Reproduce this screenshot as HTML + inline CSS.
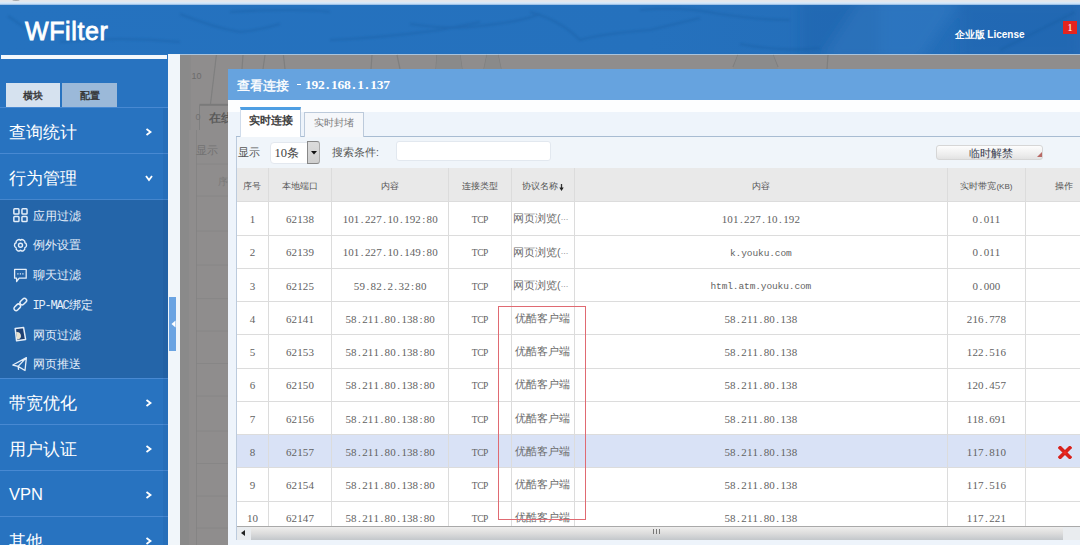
<!DOCTYPE html>
<html><head><meta charset="utf-8"><style>
*{margin:0;padding:0;box-sizing:border-box}
html,body{width:1080px;height:545px;overflow:hidden;background:#8e8e8e;font-family:"Liberation Sans",sans-serif;position:relative}
.abs{position:absolute}
#topstrip{left:0;top:0;width:1080px;height:5px;background:linear-gradient(#e5e6ea 0,#e5e6ea 1.2px,#dcebf9 2.2px,#c4ddf8 4px,#7fa8d4 5px)}
#header{left:0;top:5px;width:1080px;height:49px;background:linear-gradient(90deg,#2572bf,#2571bd 60%,#236bb6);overflow:hidden}
#logo{left:25px;top:12px;font-size:25px;color:#fff;font-weight:normal;-webkit-text-stroke:0.8px #fff;letter-spacing:0.6px}
#lic{left:954.5px;top:23px;font-size:10px;color:#fff;font-weight:bold}
#badge{left:1063px;top:16px;width:14px;height:13px;background:#e5241f;color:#fff;font-size:11px;text-align:center;line-height:13px;font-family:"Liberation Serif",serif}
#sidebar{left:0;top:54px;width:167.6px;height:491px;background:#2873c0}
#sbwhite{left:1px;top:1px;width:166px;height:4px;background:#f4f8fc}
.stab{top:29px;height:24px;font-size:10px;font-weight:normal;-webkit-text-stroke:0.35px #333;color:#333;text-align:center;line-height:25px}
.mrow{left:0;width:168px;height:46px;border-top:1px solid #4889d2;color:#fff;font-size:16.5px}
.mrow span.t{position:absolute;left:9px;top:13.5px}
.mrow svg{position:absolute;left:144.5px;top:19.5px}
#submenu{left:0;top:199px;width:168px;height:179px;background:#2465a9;border-top:1px solid #4586cd}
.sitem{left:13px;height:30px;color:#e4eef9;font-size:12px}
.sitem svg{position:absolute;left:0;top:6.75px;overflow:visible}
.sitem .tx{position:absolute;left:19.5px;top:7.5px;white-space:nowrap}
#lstrip{left:167.6px;top:54px;width:12.4px;height:491px;background:#f1f6fa}
#modal{left:228px;top:69px;width:852px;height:476px;background:#f0f5fb}
#mtitle{left:0;top:0;width:852px;height:30.5px;background:#66a3df}
#mwhite{left:0;top:30.5px;width:852px;height:8px;background:#fff}
#tabbar{left:0;top:38px;width:852px;height:30px;background:#eef4fb}
#tab1{left:12px;top:38px;width:61px;height:30px;background:#fff;border-top:3px solid #4d9ee3;font-size:12px;font-weight:bold;color:#333;text-align:center;line-height:26px}
#tab2{left:76px;top:43px;width:60px;height:25px;background:#f6f6f4;border:1px solid #c9d5e2;border-bottom:none;font-size:12px;color:#777;text-align:center;line-height:23px}
#tabline{left:8px;top:67px;width:844px;height:1px;background:#a9bdd3}
#panel{left:8px;top:68px;width:844px;height:408px;background:#f0f5fa;border-left:1px solid #bfcde0}
.ctl{font-size:12px;color:#444}
#sel{left:42px;top:72px;width:50px;height:23px;background:#fff;border:1px solid #e0e6ee;border-radius:3px;font-size:12px;color:#333;line-height:21px;padding-left:7px}
#selbtn{left:79px;top:72px;width:13px;height:23px;background:#d5d5d5;border:1px solid #9a9a9a}
#inp{left:168px;top:72px;width:156px;height:20px;background:#fff;border:1px solid #dde4ec;border-radius:2px}
#btn{left:708px;top:76px;width:107px;height:15px;background:linear-gradient(#fbfbfb,#e6e6e6);border:1px solid #d0d0d0;border-radius:3px;font-size:11px;color:#334;text-align:center;line-height:13px}
.th{font-size:9px;color:#555;text-align:center;display:flex;align-items:center;justify-content:center;white-space:nowrap;padding-top:2.5px}
.kb{font-family:"Liberation Sans";font-size:8px}
.td{display:flex;align-items:center;justify-content:center;white-space:nowrap;color:#626262;font-family:"Liberation Serif",serif;font-size:11px;padding-top:1.5px}
.td i{display:inline-block;font-style:normal;text-align:center}
.td i.L{font-family:"Liberation Mono",monospace;font-size:9.5px}
.td i.U{font-family:"Liberation Serif",serif;font-size:9.5px}
.td b.cj{font-weight:normal;font-family:"Liberation Sans"}
.cjk{font-family:"Liberation Sans";font-size:10.5px;color:#6a6a6a}
.hl{background:#dcdcdc}
.vl{background:#dcdcdc}
#scroll{left:237px;top:526px;width:843px;height:13px;background:#e8e8e8}
#redrect{left:497.8px;top:305.8px;width:88.3px;height:214px;border:1px solid #e46a6a}

.ttl i{display:inline-block;font-style:normal;text-align:center;font-family:"Liberation Serif",serif;font-size:13.5px;font-weight:bold;position:relative;top:-0.5px;-webkit-text-stroke:0}
</style></head><body>
<div id="topstrip" class="abs"></div><div class="abs" style="left:12px;top:-2px;width:8px;height:3px;border-radius:50%;background:#a9a9ab"></div>
<div id="header" class="abs"><svg class="abs" style="left:0;top:0" width="1080" height="49" viewBox="0 5 1080 49"><defs><filter id="bl" x="-10%" y="-50%" width="120%" height="200%"><feGaussianBlur stdDeviation="1.2"/></filter><filter id="bl2"><feGaussianBlur stdDeviation="6"/></filter></defs>
<g filter="url(#bl2)"><rect x="800" y="0" width="80" height="60" fill="#1d5ea6" opacity="0.35"/><path d="M860 0 L960 0 L920 60 L820 60 Z" fill="#3a82c8" opacity="0.35"/><rect x="960" y="0" width="120" height="60" fill="#1f5fa8" opacity="0.3"/></g>
<g filter="url(#bl)" fill="none" stroke="#195a9e" stroke-width="2.2" opacity="0.35">
<path d="M8 16 Q25 28 40 38"/><path d="M180 14 Q215 28 240 32 Q260 30 280 24"/><path d="M60 42 Q120 36 180 42"/><path d="M330 40 Q380 38 440 30 L480 22"/><path d="M410 24 Q450 30 480 26 Q520 22 540 14"/><path d="M530 12 Q560 20 580 40 Q600 34 650 30 L700 18"/><path d="M640 10 Q680 6 720 14 Q760 20 790 20"/><path d="M740 44 Q780 52 820 48"/><path d="M230 12 Q300 8 330 12"/><path d="M1000 50 Q1040 30 1075 12"/></g>
</svg><div id="logo" class="abs">WFilter</div><div id="lic" class="abs">企业版 License</div><div id="badge" class="abs">1</div></div>
<div class="abs" style="left:180px;top:54px;width:900px;height:491px;background:#8f8d8d"></div>
<div class="abs" style="left:168px;top:54px;width:912px;height:1.3px;background:#a9c3dd"></div>
<svg class="abs" style="left:0;top:0" width="1080" height="545" viewBox="0 0 1080 545"><rect x="180" y="55" width="9" height="490" fill="#8a8a8a"/><line x1="196.5" y1="130" x2="196.5" y2="545" stroke="#7f7f7f" stroke-width="1" opacity="0.6"/><line x1="190" y1="55" x2="190" y2="130" stroke="#7f7f7f" stroke-width="1" opacity="0.4"/><line x1="216.4" y1="55" x2="210.5" y2="104" stroke="#7f7f7f" stroke-width="1.2"/><line x1="243" y1="55" x2="242" y2="69" stroke="#7f7f7f" stroke-width="1.2"/><line x1="265" y1="55" x2="263" y2="69" stroke="#7f7f7f" stroke-width="1.2"/><line x1="283.4" y1="55" x2="285" y2="69" stroke="#7f7f7f" stroke-width="1.2"/><line x1="372" y1="55" x2="371" y2="69" stroke="#7f7f7f" stroke-width="1.2"/><line x1="397" y1="55" x2="400" y2="69" stroke="#7f7f7f" stroke-width="1.2"/><line x1="437" y1="55" x2="436" y2="69" stroke="#7f7f7f" stroke-width="1.2"/><line x1="460" y1="55" x2="462" y2="69" stroke="#7f7f7f" stroke-width="1.2"/><line x1="487" y1="55" x2="484" y2="69" stroke="#7f7f7f" stroke-width="1.2"/><line x1="498" y1="55" x2="501" y2="69" stroke="#7f7f7f" stroke-width="1.2"/><line x1="738" y1="55" x2="733" y2="67" stroke="#7f7f7f" stroke-width="1.2"/><line x1="773" y1="55" x2="778" y2="67" stroke="#7f7f7f" stroke-width="1.2"/><line x1="828" y1="55" x2="827" y2="69" stroke="#7f7f7f" stroke-width="1.2"/><path d="M437 55 L460 55 L462 69 L436 69 Z" fill="#8a8a8a"/><path d="M487 55 L498 55 L501 69 L484 69 Z" fill="#8a8a8a"/><path d="M738 55 L773 55 L778 69 L733 69 Z" fill="#8b8b8b"/><line x1="199.5" y1="104.8" x2="228" y2="104.8" stroke="#7a7a7a" stroke-width="2"/><line x1="199.5" y1="104.8" x2="199.5" y2="130" stroke="#7f7f7f" stroke-width="1"/><line x1="196.5" y1="164" x2="228" y2="164" stroke="#7f7f7f" stroke-width="1" opacity="0.45"/><line x1="196.5" y1="196" x2="228" y2="196" stroke="#7f7f7f" stroke-width="1" opacity="0.45"/><line x1="196.5" y1="231" x2="228" y2="231" stroke="#7f7f7f" stroke-width="1" opacity="0.45"/><line x1="196.5" y1="265" x2="228" y2="265" stroke="#7f7f7f" stroke-width="1" opacity="0.45"/><line x1="196.5" y1="298.6" x2="228" y2="298.6" stroke="#7f7f7f" stroke-width="1" opacity="0.45"/><line x1="196.5" y1="331" x2="228" y2="331" stroke="#7f7f7f" stroke-width="1" opacity="0.45"/><line x1="196.5" y1="363.5" x2="228" y2="363.5" stroke="#7f7f7f" stroke-width="1" opacity="0.45"/><line x1="196.5" y1="396" x2="228" y2="396" stroke="#7f7f7f" stroke-width="1" opacity="0.45"/><line x1="196.5" y1="431" x2="228" y2="431" stroke="#7f7f7f" stroke-width="1" opacity="0.45"/><line x1="196.5" y1="463.5" x2="228" y2="463.5" stroke="#7f7f7f" stroke-width="1" opacity="0.45"/><line x1="196.5" y1="496" x2="228" y2="496" stroke="#7f7f7f" stroke-width="1" opacity="0.45"/><line x1="196.5" y1="528" x2="228" y2="528" stroke="#7f7f7f" stroke-width="1" opacity="0.45"/></svg>
<div class="abs" style="left:191.5px;top:71px;font-size:9px;color:#6c6c6c">10</div>
<div class="abs" style="left:195.5px;top:112px;font-size:9px;color:#727272">0</div>
<div class="abs" style="left:208.5px;top:110.5px;font-size:11.5px;color:#555;-webkit-text-stroke:0.3px #555">在线</div>
<div class="abs" style="left:196px;top:143.5px;font-size:10.5px;color:#737373">显示</div>
<div class="abs" style="left:218px;top:175px;font-size:10px;color:#7a7a7a">序</div>
<div id="sidebar" class="abs"><div id="sbwhite" class="abs"></div>
<div class="abs stab" style="left:6px;width:54px;background:#d6e2ef">横块</div>
<div class="abs stab" style="left:62px;width:55px;background:#9bb9d9">配置</div>
<div class="abs mrow" style="top:53px"><span class="t">查询统计</span><svg width="8" height="8" viewBox="0 0 8 8"><polyline points="1.5,1 5.5,4 1.5,7" fill="none" stroke="#fff" stroke-width="1.8"/></svg></div>
<div class="abs mrow" style="top:99px"><span class="t">行为管理</span><svg width="8" height="8" viewBox="0 0 8 8"><polyline points="1,2 4,6 7,2" fill="none" stroke="#fff" stroke-width="1.8"/></svg></div>
<div class="abs mrow" style="top:324px"><span class="t">带宽优化</span><svg width="8" height="8" viewBox="0 0 8 8"><polyline points="1.5,1 5.5,4 1.5,7" fill="none" stroke="#fff" stroke-width="1.8"/></svg></div>
<div class="abs mrow" style="top:370px"><span class="t">用户认证</span><svg width="8" height="8" viewBox="0 0 8 8"><polyline points="1.5,1 5.5,4 1.5,7" fill="none" stroke="#fff" stroke-width="1.8"/></svg></div>
<div class="abs mrow" style="top:416px"><span class="t">VPN</span><svg width="8" height="8" viewBox="0 0 8 8"><polyline points="1.5,1 5.5,4 1.5,7" fill="none" stroke="#fff" stroke-width="1.8"/></svg></div>
<div class="abs mrow" style="top:462px"><span class="t">其他</span><svg width="8" height="8" viewBox="0 0 8 8"><polyline points="1.5,1 5.5,4 1.5,7" fill="none" stroke="#fff" stroke-width="1.8"/></svg></div>
</div>
<div id="submenu" class="abs">
<div class="abs sitem" style="top:0.0px"><svg width="16" height="16" viewBox="0 0 16 16" fill="none" stroke="#e4eef9" stroke-width="1.5"><rect x="0.85" y="1.85" width="5.1" height="5.1" rx="0.8"/><rect x="8.95" y="1.85" width="5.1" height="5.1" rx="0.8"/><rect x="0.85" y="9.45" width="5.1" height="5.1" rx="0.8"/><rect x="8.95" y="9.45" width="5.1" height="5.1" rx="0.8"/></svg><span class="tx">应用过滤</span></div>
<div class="abs sitem" style="top:29.75px"><svg width="16" height="16" viewBox="0 0 16 16" fill="none" stroke="#e4eef9" stroke-width="1.4" stroke-linejoin="round"><path d="M11.83 5.80 C14.10 6.28 14.10 10.32 11.83 10.80 C12.55 13.01 9.05 15.02 7.50 13.30 C5.95 15.02 2.45 13.01 3.17 10.80 C0.90 10.32 0.90 6.28 3.17 5.80 C2.45 3.59 5.95 1.58 7.50 3.30 C9.05 1.58 12.55 3.59 11.83 5.80 Z"/><circle cx="7.5" cy="8.3" r="2"/></svg><span class="tx">例外设置</span></div>
<div class="abs sitem" style="top:59.5px"><svg width="16" height="17" viewBox="0 0 16 17" fill="none" stroke="#e4eef9" stroke-width="1.3" stroke-linejoin="round"><path d="M1.6 3.4 H13.2 V12.2 H6.2 L3.6 15.6 V12.2 H1.6 Z"/><path d="M4.3 7.8 H5.5 M6.8 7.8 H8 M9.3 7.8 H10.5" stroke-width="1.2"/></svg><span class="tx">聊天过滤</span></div>
<div class="abs sitem" style="top:89.25px"><svg width="16" height="16" viewBox="0 0 16 16" fill="none" stroke="#e4eef9" stroke-width="1.5"><rect x="8.15" y="1.80" width="4.3" height="7.6" rx="2.15" transform="rotate(45 10.3 5.6)"/><rect x="2.15" y="7.50" width="4.3" height="7.6" rx="2.15" transform="rotate(45 4.3 11.3)"/></svg><span class="tx"><span style="font-family:Liberation Mono;font-size:12px;letter-spacing:-1.2px">IP-MAC</span>绑定</span></div>
<div class="abs sitem" style="top:119.0px"><svg width="16" height="16" viewBox="0 0 16 16"><path d="M2.2 2.4 L10.6 1.6 L12.6 13.4 L3.6 14.8 Z" fill="#1d3f72" stroke="#e4eef9" stroke-width="1.5" stroke-linejoin="round"/><path d="M3.2 6 Q7.6 5.6 8 10 Q7.8 13.2 4.2 13.6 Z" fill="#e9e4d0"/></svg><span class="tx">网页过滤</span></div>
<div class="abs sitem" style="top:148.75px"><svg width="16" height="16" viewBox="0 0 16 16" fill="none" stroke="#e4eef9" stroke-width="1.3" stroke-linejoin="round"><path d="M13.4 1.6 L-0.2 9 L5.1 10.4 L12 14.5 Z M5.1 10.4 L5.6 13.8 M5.1 10.4 L13.4 1.6"/></svg><span class="tx">网页推送</span></div>
</div>
<div class="abs" style="left:162.5px;top:108px;width:5.1px;height:437px;background:rgba(10,40,90,0.06)"></div>
<div id="lstrip" class="abs"><div class="abs" style="left:1px;top:243px;width:7.4px;height:53.5px;background:#6ba4e2"></div><svg class="abs" style="left:3px;top:266px" width="5" height="8" viewBox="0 0 5 8"><path d="M4.5 0.5 L0.5 4 L4.5 7.5 Z" fill="#fff"/></svg></div>
<div class="abs" style="left:228px;top:69px;width:852px;height:476px;background:#eef4fb"></div>
<div class="abs" style="left:228px;top:69px;width:852px;height:30.5px;background:#66a3df"></div>
<div class="abs" style="left:228px;top:99.5px;width:852px;height:12px;background:#fdfeff"></div>
<div class="abs" style="left:236px;top:136px;width:844px;height:409px;background:#f0f5fa;border-left:1px solid #bccbdd"></div>
<div class="abs" style="left:236px;top:136px;width:844px;height:1px;background:#a8bcd2"></div>
<div class="abs" style="left:240px;top:107px;width:61px;height:30px;background:#fff;border-top:3px solid #4d9ee3;border-left:1px solid #d0dceb;border-right:1px solid #b9c9dc"></div>
<div class="abs" style="left:249px;top:113px;font-size:11px;color:#333;white-space:nowrap;-webkit-text-stroke:0.4px #333">实时连接</div>
<div class="abs" style="left:304px;top:112px;width:59.5px;height:24.5px;background:#f5f7fa;border:1px solid #bccadb;border-bottom:none"></div>
<div class="abs" style="left:313.5px;top:116px;font-size:10.2px;color:#7a7a7a;white-space:nowrap">实时封堵</div>
<div class="abs" style="left:238px;top:145.5px;font-size:10.5px;color:#555;white-space:nowrap">显示</div>
<div class="abs" style="left:269.7px;top:141.5px;width:50px;height:22.5px;background:#fff;border:1px solid #e3e8ef;border-radius:4px"></div>
<div class="abs" style="left:274.5px;top:145px;font-size:12px;color:#444;white-space:nowrap"><span style="font-family:Liberation Serif;font-size:12.5px">10</span>条</div>
<div class="abs" style="left:307.2px;top:141.3px;width:12.5px;height:22.5px;background:linear-gradient(#dcdcdc,#cfcfcf);border:1px solid #888;border-right-color:#aaa;border-radius:0 3px 3px 0"></div>
<svg class="abs" style="left:310.5px;top:151px" width="6" height="3.5" viewBox="0 0 6 3.5"><path d="M0 0 H6 L3 3.5 Z" fill="#111"/></svg>
<div class="abs" style="left:332px;top:145.5px;font-size:10.5px;color:#555;white-space:nowrap">搜索条件:</div>
<div class="abs" style="left:395.7px;top:141.3px;width:155.6px;height:20.2px;background:#fff;border:1px solid #e2e8ef;border-radius:3px"></div>
<div class="abs" style="left:936.3px;top:144.8px;width:106.7px;height:15px;background:linear-gradient(#fdfdfd,#ececec 70%,#e2e2e2);border:1px solid #d6d6d6;border-radius:3px"></div>
<svg class="abs" style="left:1037px;top:152px" width="5" height="5" viewBox="0 0 5 5"><path d="M5 0 V5 H0 Z" fill="#b86a66"/></svg>
<div class="abs" style="left:968.5px;top:146px;font-size:11px;color:#3a4050;white-space:nowrap">临时解禁</div>
<div class="abs" style="left:237px;top:77.5px;color:#fff;font-size:12.5px;white-space:nowrap;-webkit-text-stroke:0.35px #fff">查看连接</div>
<div class="abs" style="left:296.5px;top:84px;width:4px;height:1.2px;background:#fff"></div>
<div class="abs ttl" style="left:305px;top:75px;color:#fff;white-space:nowrap"><i style="width:6.52px">1</i><i style="width:6.52px">9</i><i style="width:6.52px">2</i><i style="width:6.52px">.</i><i style="width:6.52px">1</i><i style="width:6.52px">6</i><i style="width:6.52px">8</i><i style="width:6.52px">.</i><i style="width:6.52px">1</i><i style="width:6.52px">.</i><i style="width:6.52px">1</i><i style="width:6.52px">3</i><i style="width:6.52px">7</i></div>
<div class="abs" style="left:236.5px;top:168px;width:843.5px;height:33.80000000000001px;background:#e9e9e9"></div>
<div class="abs th" style="left:236.5px;top:168px;width:31.899999999999977px;height:33.80000000000001px">序号</div>
<div class="abs th" style="left:268.4px;top:168px;width:63.10000000000002px;height:33.80000000000001px">本地端口</div>
<div class="abs th" style="left:331.5px;top:168px;width:117.30000000000001px;height:33.80000000000001px">内容</div>
<div class="abs th" style="left:448.8px;top:168px;width:62.599999999999966px;height:33.80000000000001px">连接类型</div>
<div class="abs th" style="left:511.4px;top:168px;width:62.80000000000007px;height:33.80000000000001px">协议名称<svg width="5" height="7" viewBox="0 0 5 7" style="margin-left:0.5px;margin-top:2px"><path d="M2.5 0 V5" stroke="#333" stroke-width="1.3"/><path d="M0.3 3.6 L4.7 3.6 L2.5 7 Z" fill="#222"/></svg></div>
<div class="abs th" style="left:574.2px;top:168px;width:373.29999999999995px;height:33.80000000000001px">内容</div>
<div class="abs th" style="left:947.5px;top:168px;width:77.79999999999995px;height:33.80000000000001px">实时带宽<span class="kb">(KB)</span></div>
<div class="abs th" style="left:1025.3px;top:168px;width:76.70000000000005px;height:33.80000000000001px">操作</div>
<div class="abs" style="left:237.0px;top:201.8px;width:843.5px;height:33.25px;background:#fff"></div>
<div class="abs hl" style="left:236.5px;top:201.3px;width:843.5px;height:1px"></div>
<div class="abs td" style="left:236.5px;top:201.8px;width:31.899999999999977px;height:33.25px"><span><i style="width:5.6px">1</i></span></div>
<div class="abs td" style="left:268.4px;top:201.8px;width:63.10000000000002px;height:33.25px"><span><i style="width:5.6px">6</i><i style="width:5.6px">2</i><i style="width:5.6px">1</i><i style="width:5.6px">3</i><i style="width:5.6px">8</i></span></div>
<div class="abs td" style="left:331.5px;top:201.8px;width:117.30000000000001px;height:33.25px"><span><i style="width:5.6px">1</i><i style="width:5.6px">0</i><i style="width:5.6px">1</i><i style="width:5.6px">.</i><i style="width:5.6px">2</i><i style="width:5.6px">2</i><i style="width:5.6px">7</i><i style="width:5.6px">.</i><i style="width:5.6px">1</i><i style="width:5.6px">0</i><i style="width:5.6px">.</i><i style="width:5.6px">1</i><i style="width:5.6px">9</i><i style="width:5.6px">2</i><i style="width:5.6px">:</i><i style="width:5.6px">8</i><i style="width:5.6px">0</i></span></div>
<div class="abs td" style="left:448.8px;top:201.8px;width:62.599999999999966px;height:33.25px"><span><i class="U" style="width:5.6px">T</i><i class="U" style="width:5.6px">C</i><i class="U" style="width:5.6px">P</i></span></div>
<div class="abs td" style="left:511.4px;top:201.8px;width:62.80000000000007px;height:33.25px"><span class="cjk" style="position:absolute;left:1.5px;top:10.5px">网页浏览(<span style="font-size:8px;position:relative;top:-2px">…</span></span></div>
<div class="abs td" style="left:574.2px;top:201.8px;width:373.29999999999995px;height:33.25px"><span><i style="width:5.6px">1</i><i style="width:5.6px">0</i><i style="width:5.6px">1</i><i style="width:5.6px">.</i><i style="width:5.6px">2</i><i style="width:5.6px">2</i><i style="width:5.6px">7</i><i style="width:5.6px">.</i><i style="width:5.6px">1</i><i style="width:5.6px">0</i><i style="width:5.6px">.</i><i style="width:5.6px">1</i><i style="width:5.6px">9</i><i style="width:5.6px">2</i></span></div>
<div class="abs td" style="left:947.5px;top:201.8px;width:77.79999999999995px;height:33.25px"><span><i style="width:5.6px">0</i><i style="width:5.6px">.</i><i style="width:5.6px">0</i><i style="width:5.6px">1</i><i style="width:5.6px">1</i></span></div>
<div class="abs" style="left:237.0px;top:235.05px;width:843.5px;height:33.25px;background:#fff"></div>
<div class="abs hl" style="left:236.5px;top:234.55px;width:843.5px;height:1px"></div>
<div class="abs td" style="left:236.5px;top:235.05px;width:31.899999999999977px;height:33.25px"><span><i style="width:5.6px">2</i></span></div>
<div class="abs td" style="left:268.4px;top:235.05px;width:63.10000000000002px;height:33.25px"><span><i style="width:5.6px">6</i><i style="width:5.6px">2</i><i style="width:5.6px">1</i><i style="width:5.6px">3</i><i style="width:5.6px">9</i></span></div>
<div class="abs td" style="left:331.5px;top:235.05px;width:117.30000000000001px;height:33.25px"><span><i style="width:5.6px">1</i><i style="width:5.6px">0</i><i style="width:5.6px">1</i><i style="width:5.6px">.</i><i style="width:5.6px">2</i><i style="width:5.6px">2</i><i style="width:5.6px">7</i><i style="width:5.6px">.</i><i style="width:5.6px">1</i><i style="width:5.6px">0</i><i style="width:5.6px">.</i><i style="width:5.6px">1</i><i style="width:5.6px">4</i><i style="width:5.6px">9</i><i style="width:5.6px">:</i><i style="width:5.6px">8</i><i style="width:5.6px">0</i></span></div>
<div class="abs td" style="left:448.8px;top:235.05px;width:62.599999999999966px;height:33.25px"><span><i class="U" style="width:5.6px">T</i><i class="U" style="width:5.6px">C</i><i class="U" style="width:5.6px">P</i></span></div>
<div class="abs td" style="left:511.4px;top:235.05px;width:62.80000000000007px;height:33.25px"><span class="cjk" style="position:absolute;left:1.5px;top:10.5px">网页浏览(<span style="font-size:8px;position:relative;top:-2px">…</span></span></div>
<div class="abs td" style="left:574.2px;top:235.05px;width:373.29999999999995px;height:33.25px"><span><i class="L" style="width:5.6px">k</i><i style="width:5.6px">.</i><i class="L" style="width:5.6px">y</i><i class="L" style="width:5.6px">o</i><i class="L" style="width:5.6px">u</i><i class="L" style="width:5.6px">k</i><i class="L" style="width:5.6px">u</i><i style="width:5.6px">.</i><i class="L" style="width:5.6px">c</i><i class="L" style="width:5.6px">o</i><i class="L" style="width:5.6px">m</i></span></div>
<div class="abs td" style="left:947.5px;top:235.05px;width:77.79999999999995px;height:33.25px"><span><i style="width:5.6px">0</i><i style="width:5.6px">.</i><i style="width:5.6px">0</i><i style="width:5.6px">1</i><i style="width:5.6px">1</i></span></div>
<div class="abs" style="left:237.0px;top:268.3px;width:843.5px;height:33.25px;background:#fff"></div>
<div class="abs hl" style="left:236.5px;top:267.8px;width:843.5px;height:1px"></div>
<div class="abs td" style="left:236.5px;top:268.3px;width:31.899999999999977px;height:33.25px"><span><i style="width:5.6px">3</i></span></div>
<div class="abs td" style="left:268.4px;top:268.3px;width:63.10000000000002px;height:33.25px"><span><i style="width:5.6px">6</i><i style="width:5.6px">2</i><i style="width:5.6px">1</i><i style="width:5.6px">2</i><i style="width:5.6px">5</i></span></div>
<div class="abs td" style="left:331.5px;top:268.3px;width:117.30000000000001px;height:33.25px"><span><i style="width:5.6px">5</i><i style="width:5.6px">9</i><i style="width:5.6px">.</i><i style="width:5.6px">8</i><i style="width:5.6px">2</i><i style="width:5.6px">.</i><i style="width:5.6px">2</i><i style="width:5.6px">.</i><i style="width:5.6px">3</i><i style="width:5.6px">2</i><i style="width:5.6px">:</i><i style="width:5.6px">8</i><i style="width:5.6px">0</i></span></div>
<div class="abs td" style="left:448.8px;top:268.3px;width:62.599999999999966px;height:33.25px"><span><i class="U" style="width:5.6px">T</i><i class="U" style="width:5.6px">C</i><i class="U" style="width:5.6px">P</i></span></div>
<div class="abs td" style="left:511.4px;top:268.3px;width:62.80000000000007px;height:33.25px"><span class="cjk" style="position:absolute;left:1.5px;top:10.5px">网页浏览(<span style="font-size:8px;position:relative;top:-2px">…</span></span></div>
<div class="abs td" style="left:574.2px;top:268.3px;width:373.29999999999995px;height:33.25px"><span><i class="L" style="width:5.6px">h</i><i class="L" style="width:5.6px">t</i><i class="L" style="width:5.6px">m</i><i class="L" style="width:5.6px">l</i><i style="width:5.6px">.</i><i class="L" style="width:5.6px">a</i><i class="L" style="width:5.6px">t</i><i class="L" style="width:5.6px">m</i><i style="width:5.6px">.</i><i class="L" style="width:5.6px">y</i><i class="L" style="width:5.6px">o</i><i class="L" style="width:5.6px">u</i><i class="L" style="width:5.6px">k</i><i class="L" style="width:5.6px">u</i><i style="width:5.6px">.</i><i class="L" style="width:5.6px">c</i><i class="L" style="width:5.6px">o</i><i class="L" style="width:5.6px">m</i></span></div>
<div class="abs td" style="left:947.5px;top:268.3px;width:77.79999999999995px;height:33.25px"><span><i style="width:5.6px">0</i><i style="width:5.6px">.</i><i style="width:5.6px">0</i><i style="width:5.6px">0</i><i style="width:5.6px">0</i></span></div>
<div class="abs" style="left:237.0px;top:301.55px;width:843.5px;height:33.25px;background:#fff"></div>
<div class="abs hl" style="left:236.5px;top:301.05px;width:843.5px;height:1px"></div>
<div class="abs td" style="left:236.5px;top:301.55px;width:31.899999999999977px;height:33.25px"><span><i style="width:5.6px">4</i></span></div>
<div class="abs td" style="left:268.4px;top:301.55px;width:63.10000000000002px;height:33.25px"><span><i style="width:5.6px">6</i><i style="width:5.6px">2</i><i style="width:5.6px">1</i><i style="width:5.6px">4</i><i style="width:5.6px">1</i></span></div>
<div class="abs td" style="left:331.5px;top:301.55px;width:117.30000000000001px;height:33.25px"><span><i style="width:5.6px">5</i><i style="width:5.6px">8</i><i style="width:5.6px">.</i><i style="width:5.6px">2</i><i style="width:5.6px">1</i><i style="width:5.6px">1</i><i style="width:5.6px">.</i><i style="width:5.6px">8</i><i style="width:5.6px">0</i><i style="width:5.6px">.</i><i style="width:5.6px">1</i><i style="width:5.6px">3</i><i style="width:5.6px">8</i><i style="width:5.6px">:</i><i style="width:5.6px">8</i><i style="width:5.6px">0</i></span></div>
<div class="abs td" style="left:448.8px;top:301.55px;width:62.599999999999966px;height:33.25px"><span><i class="U" style="width:5.6px">T</i><i class="U" style="width:5.6px">C</i><i class="U" style="width:5.6px">P</i></span></div>
<div class="abs td" style="left:511.4px;top:301.55px;width:62.80000000000007px;height:33.25px"><span class="cjk">优酷客户端</span></div>
<div class="abs td" style="left:574.2px;top:301.55px;width:373.29999999999995px;height:33.25px"><span><i style="width:5.6px">5</i><i style="width:5.6px">8</i><i style="width:5.6px">.</i><i style="width:5.6px">2</i><i style="width:5.6px">1</i><i style="width:5.6px">1</i><i style="width:5.6px">.</i><i style="width:5.6px">8</i><i style="width:5.6px">0</i><i style="width:5.6px">.</i><i style="width:5.6px">1</i><i style="width:5.6px">3</i><i style="width:5.6px">8</i></span></div>
<div class="abs td" style="left:947.5px;top:301.55px;width:77.79999999999995px;height:33.25px"><span><i style="width:5.6px">2</i><i style="width:5.6px">1</i><i style="width:5.6px">6</i><i style="width:5.6px">.</i><i style="width:5.6px">7</i><i style="width:5.6px">7</i><i style="width:5.6px">8</i></span></div>
<div class="abs" style="left:237.0px;top:334.8px;width:843.5px;height:33.25px;background:#fff"></div>
<div class="abs hl" style="left:236.5px;top:334.3px;width:843.5px;height:1px"></div>
<div class="abs td" style="left:236.5px;top:334.8px;width:31.899999999999977px;height:33.25px"><span><i style="width:5.6px">5</i></span></div>
<div class="abs td" style="left:268.4px;top:334.8px;width:63.10000000000002px;height:33.25px"><span><i style="width:5.6px">6</i><i style="width:5.6px">2</i><i style="width:5.6px">1</i><i style="width:5.6px">5</i><i style="width:5.6px">3</i></span></div>
<div class="abs td" style="left:331.5px;top:334.8px;width:117.30000000000001px;height:33.25px"><span><i style="width:5.6px">5</i><i style="width:5.6px">8</i><i style="width:5.6px">.</i><i style="width:5.6px">2</i><i style="width:5.6px">1</i><i style="width:5.6px">1</i><i style="width:5.6px">.</i><i style="width:5.6px">8</i><i style="width:5.6px">0</i><i style="width:5.6px">.</i><i style="width:5.6px">1</i><i style="width:5.6px">3</i><i style="width:5.6px">8</i><i style="width:5.6px">:</i><i style="width:5.6px">8</i><i style="width:5.6px">0</i></span></div>
<div class="abs td" style="left:448.8px;top:334.8px;width:62.599999999999966px;height:33.25px"><span><i class="U" style="width:5.6px">T</i><i class="U" style="width:5.6px">C</i><i class="U" style="width:5.6px">P</i></span></div>
<div class="abs td" style="left:511.4px;top:334.8px;width:62.80000000000007px;height:33.25px"><span class="cjk">优酷客户端</span></div>
<div class="abs td" style="left:574.2px;top:334.8px;width:373.29999999999995px;height:33.25px"><span><i style="width:5.6px">5</i><i style="width:5.6px">8</i><i style="width:5.6px">.</i><i style="width:5.6px">2</i><i style="width:5.6px">1</i><i style="width:5.6px">1</i><i style="width:5.6px">.</i><i style="width:5.6px">8</i><i style="width:5.6px">0</i><i style="width:5.6px">.</i><i style="width:5.6px">1</i><i style="width:5.6px">3</i><i style="width:5.6px">8</i></span></div>
<div class="abs td" style="left:947.5px;top:334.8px;width:77.79999999999995px;height:33.25px"><span><i style="width:5.6px">1</i><i style="width:5.6px">2</i><i style="width:5.6px">2</i><i style="width:5.6px">.</i><i style="width:5.6px">5</i><i style="width:5.6px">1</i><i style="width:5.6px">6</i></span></div>
<div class="abs" style="left:237.0px;top:368.05px;width:843.5px;height:33.25px;background:#fff"></div>
<div class="abs hl" style="left:236.5px;top:367.55px;width:843.5px;height:1px"></div>
<div class="abs td" style="left:236.5px;top:368.05px;width:31.899999999999977px;height:33.25px"><span><i style="width:5.6px">6</i></span></div>
<div class="abs td" style="left:268.4px;top:368.05px;width:63.10000000000002px;height:33.25px"><span><i style="width:5.6px">6</i><i style="width:5.6px">2</i><i style="width:5.6px">1</i><i style="width:5.6px">5</i><i style="width:5.6px">0</i></span></div>
<div class="abs td" style="left:331.5px;top:368.05px;width:117.30000000000001px;height:33.25px"><span><i style="width:5.6px">5</i><i style="width:5.6px">8</i><i style="width:5.6px">.</i><i style="width:5.6px">2</i><i style="width:5.6px">1</i><i style="width:5.6px">1</i><i style="width:5.6px">.</i><i style="width:5.6px">8</i><i style="width:5.6px">0</i><i style="width:5.6px">.</i><i style="width:5.6px">1</i><i style="width:5.6px">3</i><i style="width:5.6px">8</i><i style="width:5.6px">:</i><i style="width:5.6px">8</i><i style="width:5.6px">0</i></span></div>
<div class="abs td" style="left:448.8px;top:368.05px;width:62.599999999999966px;height:33.25px"><span><i class="U" style="width:5.6px">T</i><i class="U" style="width:5.6px">C</i><i class="U" style="width:5.6px">P</i></span></div>
<div class="abs td" style="left:511.4px;top:368.05px;width:62.80000000000007px;height:33.25px"><span class="cjk">优酷客户端</span></div>
<div class="abs td" style="left:574.2px;top:368.05px;width:373.29999999999995px;height:33.25px"><span><i style="width:5.6px">5</i><i style="width:5.6px">8</i><i style="width:5.6px">.</i><i style="width:5.6px">2</i><i style="width:5.6px">1</i><i style="width:5.6px">1</i><i style="width:5.6px">.</i><i style="width:5.6px">8</i><i style="width:5.6px">0</i><i style="width:5.6px">.</i><i style="width:5.6px">1</i><i style="width:5.6px">3</i><i style="width:5.6px">8</i></span></div>
<div class="abs td" style="left:947.5px;top:368.05px;width:77.79999999999995px;height:33.25px"><span><i style="width:5.6px">1</i><i style="width:5.6px">2</i><i style="width:5.6px">0</i><i style="width:5.6px">.</i><i style="width:5.6px">4</i><i style="width:5.6px">5</i><i style="width:5.6px">7</i></span></div>
<div class="abs" style="left:237.0px;top:401.3px;width:843.5px;height:33.25px;background:#fff"></div>
<div class="abs hl" style="left:236.5px;top:400.8px;width:843.5px;height:1px"></div>
<div class="abs td" style="left:236.5px;top:401.3px;width:31.899999999999977px;height:33.25px"><span><i style="width:5.6px">7</i></span></div>
<div class="abs td" style="left:268.4px;top:401.3px;width:63.10000000000002px;height:33.25px"><span><i style="width:5.6px">6</i><i style="width:5.6px">2</i><i style="width:5.6px">1</i><i style="width:5.6px">5</i><i style="width:5.6px">6</i></span></div>
<div class="abs td" style="left:331.5px;top:401.3px;width:117.30000000000001px;height:33.25px"><span><i style="width:5.6px">5</i><i style="width:5.6px">8</i><i style="width:5.6px">.</i><i style="width:5.6px">2</i><i style="width:5.6px">1</i><i style="width:5.6px">1</i><i style="width:5.6px">.</i><i style="width:5.6px">8</i><i style="width:5.6px">0</i><i style="width:5.6px">.</i><i style="width:5.6px">1</i><i style="width:5.6px">3</i><i style="width:5.6px">8</i><i style="width:5.6px">:</i><i style="width:5.6px">8</i><i style="width:5.6px">0</i></span></div>
<div class="abs td" style="left:448.8px;top:401.3px;width:62.599999999999966px;height:33.25px"><span><i class="U" style="width:5.6px">T</i><i class="U" style="width:5.6px">C</i><i class="U" style="width:5.6px">P</i></span></div>
<div class="abs td" style="left:511.4px;top:401.3px;width:62.80000000000007px;height:33.25px"><span class="cjk">优酷客户端</span></div>
<div class="abs td" style="left:574.2px;top:401.3px;width:373.29999999999995px;height:33.25px"><span><i style="width:5.6px">5</i><i style="width:5.6px">8</i><i style="width:5.6px">.</i><i style="width:5.6px">2</i><i style="width:5.6px">1</i><i style="width:5.6px">1</i><i style="width:5.6px">.</i><i style="width:5.6px">8</i><i style="width:5.6px">0</i><i style="width:5.6px">.</i><i style="width:5.6px">1</i><i style="width:5.6px">3</i><i style="width:5.6px">8</i></span></div>
<div class="abs td" style="left:947.5px;top:401.3px;width:77.79999999999995px;height:33.25px"><span><i style="width:5.6px">1</i><i style="width:5.6px">1</i><i style="width:5.6px">8</i><i style="width:5.6px">.</i><i style="width:5.6px">6</i><i style="width:5.6px">9</i><i style="width:5.6px">1</i></span></div>
<div class="abs" style="left:237.0px;top:434.55px;width:843.5px;height:33.25px;background:#d9e2f6"></div>
<div class="abs hl" style="left:236.5px;top:434.05px;width:843.5px;height:1px"></div>
<div class="abs td" style="left:236.5px;top:434.55px;width:31.899999999999977px;height:33.25px"><span><i style="width:5.6px">8</i></span></div>
<div class="abs td" style="left:268.4px;top:434.55px;width:63.10000000000002px;height:33.25px"><span><i style="width:5.6px">6</i><i style="width:5.6px">2</i><i style="width:5.6px">1</i><i style="width:5.6px">5</i><i style="width:5.6px">7</i></span></div>
<div class="abs td" style="left:331.5px;top:434.55px;width:117.30000000000001px;height:33.25px"><span><i style="width:5.6px">5</i><i style="width:5.6px">8</i><i style="width:5.6px">.</i><i style="width:5.6px">2</i><i style="width:5.6px">1</i><i style="width:5.6px">1</i><i style="width:5.6px">.</i><i style="width:5.6px">8</i><i style="width:5.6px">0</i><i style="width:5.6px">.</i><i style="width:5.6px">1</i><i style="width:5.6px">3</i><i style="width:5.6px">8</i><i style="width:5.6px">:</i><i style="width:5.6px">8</i><i style="width:5.6px">0</i></span></div>
<div class="abs td" style="left:448.8px;top:434.55px;width:62.599999999999966px;height:33.25px"><span><i class="U" style="width:5.6px">T</i><i class="U" style="width:5.6px">C</i><i class="U" style="width:5.6px">P</i></span></div>
<div class="abs td" style="left:511.4px;top:434.55px;width:62.80000000000007px;height:33.25px"><span class="cjk">优酷客户端</span></div>
<div class="abs td" style="left:574.2px;top:434.55px;width:373.29999999999995px;height:33.25px"><span><i style="width:5.6px">5</i><i style="width:5.6px">8</i><i style="width:5.6px">.</i><i style="width:5.6px">2</i><i style="width:5.6px">1</i><i style="width:5.6px">1</i><i style="width:5.6px">.</i><i style="width:5.6px">8</i><i style="width:5.6px">0</i><i style="width:5.6px">.</i><i style="width:5.6px">1</i><i style="width:5.6px">3</i><i style="width:5.6px">8</i></span></div>
<div class="abs td" style="left:947.5px;top:434.55px;width:77.79999999999995px;height:33.25px"><span><i style="width:5.6px">1</i><i style="width:5.6px">1</i><i style="width:5.6px">7</i><i style="width:5.6px">.</i><i style="width:5.6px">8</i><i style="width:5.6px">1</i><i style="width:5.6px">0</i></span></div>
<div class="abs" style="left:237.0px;top:467.8px;width:843.5px;height:33.25px;background:#fff"></div>
<div class="abs hl" style="left:236.5px;top:467.3px;width:843.5px;height:1px"></div>
<div class="abs td" style="left:236.5px;top:467.8px;width:31.899999999999977px;height:33.25px"><span><i style="width:5.6px">9</i></span></div>
<div class="abs td" style="left:268.4px;top:467.8px;width:63.10000000000002px;height:33.25px"><span><i style="width:5.6px">6</i><i style="width:5.6px">2</i><i style="width:5.6px">1</i><i style="width:5.6px">5</i><i style="width:5.6px">4</i></span></div>
<div class="abs td" style="left:331.5px;top:467.8px;width:117.30000000000001px;height:33.25px"><span><i style="width:5.6px">5</i><i style="width:5.6px">8</i><i style="width:5.6px">.</i><i style="width:5.6px">2</i><i style="width:5.6px">1</i><i style="width:5.6px">1</i><i style="width:5.6px">.</i><i style="width:5.6px">8</i><i style="width:5.6px">0</i><i style="width:5.6px">.</i><i style="width:5.6px">1</i><i style="width:5.6px">3</i><i style="width:5.6px">8</i><i style="width:5.6px">:</i><i style="width:5.6px">8</i><i style="width:5.6px">0</i></span></div>
<div class="abs td" style="left:448.8px;top:467.8px;width:62.599999999999966px;height:33.25px"><span><i class="U" style="width:5.6px">T</i><i class="U" style="width:5.6px">C</i><i class="U" style="width:5.6px">P</i></span></div>
<div class="abs td" style="left:511.4px;top:467.8px;width:62.80000000000007px;height:33.25px"><span class="cjk">优酷客户端</span></div>
<div class="abs td" style="left:574.2px;top:467.8px;width:373.29999999999995px;height:33.25px"><span><i style="width:5.6px">5</i><i style="width:5.6px">8</i><i style="width:5.6px">.</i><i style="width:5.6px">2</i><i style="width:5.6px">1</i><i style="width:5.6px">1</i><i style="width:5.6px">.</i><i style="width:5.6px">8</i><i style="width:5.6px">0</i><i style="width:5.6px">.</i><i style="width:5.6px">1</i><i style="width:5.6px">3</i><i style="width:5.6px">8</i></span></div>
<div class="abs td" style="left:947.5px;top:467.8px;width:77.79999999999995px;height:33.25px"><span><i style="width:5.6px">1</i><i style="width:5.6px">1</i><i style="width:5.6px">7</i><i style="width:5.6px">.</i><i style="width:5.6px">5</i><i style="width:5.6px">1</i><i style="width:5.6px">6</i></span></div>
<div class="abs" style="left:237.0px;top:501.05px;width:843.5px;height:33.25px;background:#fff"></div>
<div class="abs hl" style="left:236.5px;top:500.55px;width:843.5px;height:1px"></div>
<div class="abs td" style="left:236.5px;top:501.05px;width:31.899999999999977px;height:33.25px"><span><i style="width:5.6px">1</i><i style="width:5.6px">0</i></span></div>
<div class="abs td" style="left:268.4px;top:501.05px;width:63.10000000000002px;height:33.25px"><span><i style="width:5.6px">6</i><i style="width:5.6px">2</i><i style="width:5.6px">1</i><i style="width:5.6px">4</i><i style="width:5.6px">7</i></span></div>
<div class="abs td" style="left:331.5px;top:501.05px;width:117.30000000000001px;height:33.25px"><span><i style="width:5.6px">5</i><i style="width:5.6px">8</i><i style="width:5.6px">.</i><i style="width:5.6px">2</i><i style="width:5.6px">1</i><i style="width:5.6px">1</i><i style="width:5.6px">.</i><i style="width:5.6px">8</i><i style="width:5.6px">0</i><i style="width:5.6px">.</i><i style="width:5.6px">1</i><i style="width:5.6px">3</i><i style="width:5.6px">8</i><i style="width:5.6px">:</i><i style="width:5.6px">8</i><i style="width:5.6px">0</i></span></div>
<div class="abs td" style="left:448.8px;top:501.05px;width:62.599999999999966px;height:33.25px"><span><i class="U" style="width:5.6px">T</i><i class="U" style="width:5.6px">C</i><i class="U" style="width:5.6px">P</i></span></div>
<div class="abs td" style="left:511.4px;top:501.05px;width:62.80000000000007px;height:33.25px"><span class="cjk">优酷客户端</span></div>
<div class="abs td" style="left:574.2px;top:501.05px;width:373.29999999999995px;height:33.25px"><span><i style="width:5.6px">5</i><i style="width:5.6px">8</i><i style="width:5.6px">.</i><i style="width:5.6px">2</i><i style="width:5.6px">1</i><i style="width:5.6px">1</i><i style="width:5.6px">.</i><i style="width:5.6px">8</i><i style="width:5.6px">0</i><i style="width:5.6px">.</i><i style="width:5.6px">1</i><i style="width:5.6px">3</i><i style="width:5.6px">8</i></span></div>
<div class="abs td" style="left:947.5px;top:501.05px;width:77.79999999999995px;height:33.25px"><span><i style="width:5.6px">1</i><i style="width:5.6px">1</i><i style="width:5.6px">7</i><i style="width:5.6px">.</i><i style="width:5.6px">2</i><i style="width:5.6px">2</i><i style="width:5.6px">1</i></span></div>
<div class="abs vl" style="left:267.9px;top:168px;width:1px;height:377px"></div>
<div class="abs vl" style="left:331.0px;top:168px;width:1px;height:377px"></div>
<div class="abs vl" style="left:448.3px;top:168px;width:1px;height:377px"></div>
<div class="abs vl" style="left:510.9px;top:168px;width:1px;height:377px"></div>
<div class="abs vl" style="left:573.7px;top:168px;width:1px;height:377px"></div>
<div class="abs vl" style="left:947.0px;top:168px;width:1px;height:377px"></div>
<div class="abs vl" style="left:1024.8px;top:168px;width:1px;height:377px"></div>
<div class="abs" style="left:236.5px;top:526px;width:843.5px;height:13.5px;background:#e9ecef;border-top:1px solid #a9a9a9"></div>
<div class="abs" style="left:251px;top:527px;width:812px;height:12.5px;background:linear-gradient(#efeeed,#dcdcdc 50%,#c3c7cb)"></div>
<svg class="abs" style="left:241px;top:530px" width="4" height="6" viewBox="0 0 4 6"><path d="M4 0 V6 L0 3 Z" fill="#222"/></svg>
<div class="abs" style="left:653px;top:529px;width:1px;height:5px;background:#777"></div><div class="abs" style="left:656px;top:529px;width:1px;height:5px;background:#777"></div><div class="abs" style="left:659px;top:529px;width:1px;height:5px;background:#777"></div>
<div class="abs" style="left:228px;top:539.5px;width:852px;height:6px;background:#eef4fb"></div>
<svg class="abs" style="left:1058px;top:446px" width="14" height="13" viewBox="0 0 14 13"><path d="M2.2 1.8 L11.8 11.2 M11.8 1.8 L2.2 11.2" stroke="#d8221c" stroke-width="3.6" stroke-linecap="square"/><circle cx="7" cy="6.5" r="1.6" fill="#f22a20"/></svg>
<div class="abs" style="left:497.8px;top:305.8px;width:88.3px;height:214px;border:1px solid #e06a72"></div>
</body></html>
